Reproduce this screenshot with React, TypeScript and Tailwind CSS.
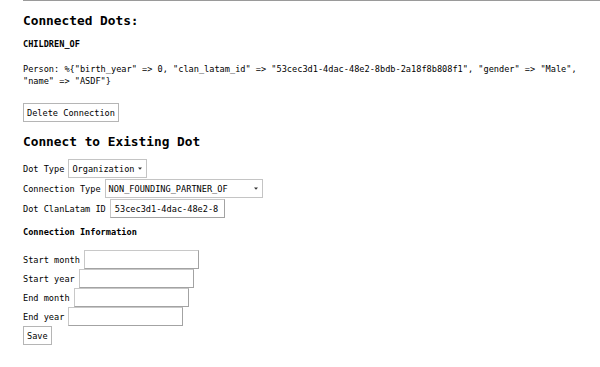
const mono = { fontFamily: '"DejaVu Sans Mono", "Liberation Mono", monospace' };

const personLine =
  'Person: %{"birth_year" => 0, "clan_latam_id" => "53cec3d1-4dac-48e2-8bdb-2a18f8b808f1", "gender" => "Male", "name" => "ASDF"}';

function Caret() {
  return (
    <svg width="4" height="3" viewBox="0 0 4 3" className="shrink-0">
      <path d="M0 0.5 L4 0.5 L2 2.8 Z" fill="#333" />
    </svg>
  );
}

function SelectBox({ value, wide }: { value: string; wide?: boolean }) {
  return (
    <div
      className={`h-[19px] flex items-center border border-[#c4c4c4] bg-white pl-[3px] pr-[4px] ${
        wide ? "w-[158px] justify-between" : "gap-[3px]"
      }`}
    >
      <span className="whitespace-nowrap">{value}</span>
      <Caret />
    </div>
  );
}

function TextBox({ value }: { value?: string }) {
  return (
    <div className="w-[115px] h-[19px] flex items-center border border-[#c8c8c8] border-r-[#a3a3a3] border-b-[#a3a3a3] bg-white px-[4px] overflow-hidden whitespace-nowrap">
      {value}
    </div>
  );
}

function Field({ label, children }: { label: string; children: React.ReactNode }) {
  return (
    <div className="flex items-center gap-[4px] h-[19px]">
      <span className="whitespace-nowrap">{label}</span>
      {children}
    </div>
  );
}

function Button({ label }: { label: string }) {
  return (
    <div className="inline-flex items-center h-[19px] px-[3px] border border-[#b5b5b5] bg-white whitespace-nowrap">
      {label}
    </div>
  );
}

export default function App() {
  return (
    <div className="w-[600px] h-[367px] bg-white overflow-hidden text-black">
      <div className="ml-[23px] border-t border-[#9a9a9a] text-[8.6px] leading-[12px]" style={mono}>
        <h1 className="mt-[12px] text-[12.8px] leading-[15px] font-bold">Connected Dots:</h1>

        <h4 className="mt-[10px] font-bold">CHILDREN_OF</h4>

        <p className="mt-[13px] pr-[15px]">{personLine}</p>

        <div className="mt-[16px]">
          <Button label="Delete Connection" />
        </div>

        <h2 className="mt-[12px] text-[12.8px] leading-[15px] font-bold">Connect to Existing Dot</h2>

        <div className="mt-[10px] flex flex-col gap-[1px]">
          <Field label="Dot Type">
            <SelectBox value="Organization" />
          </Field>
          <Field label="Connection Type">
            <SelectBox value="NON_FOUNDING_PARTNER_OF" wide />
          </Field>
          <Field label="Dot ClanLatam ID">
            <TextBox value="53cec3d1-4dac-48e2-8" />
          </Field>
        </div>

        <h4 className="mt-[8px] font-bold">Connection Information</h4>

        <div className="mt-[12px] flex flex-col">
          <Field label="Start month">
            <TextBox />
          </Field>
          <Field label="Start year">
            <TextBox />
          </Field>
          <Field label="End month">
            <TextBox />
          </Field>
          <Field label="End year">
            <TextBox />
          </Field>
        </div>

        <div>
          <Button label="Save" />
        </div>
      </div>
    </div>
  );
}
